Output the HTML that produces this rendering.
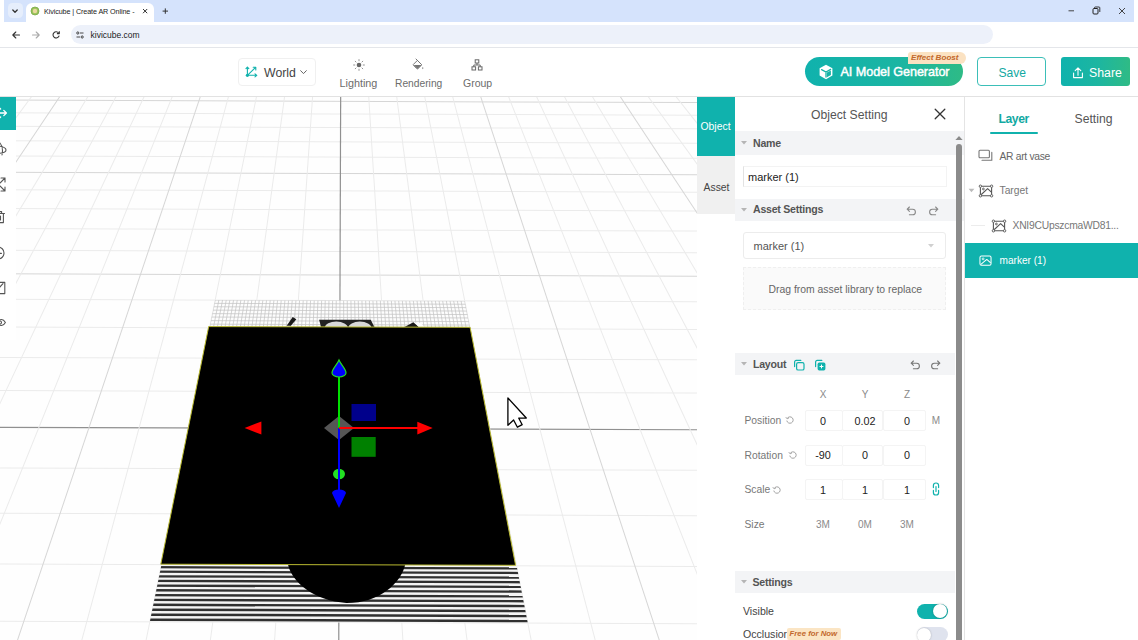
<!DOCTYPE html>
<html><head><meta charset="utf-8"><title>Kivicube | Create AR Online</title>
<style>
*{box-sizing:border-box;margin:0;padding:0}
html,body{width:1138px;height:640px;overflow:hidden;background:#fff;font-family:"Liberation Sans",sans-serif;color:#444}
.abs{position:absolute}
#tabstrip{left:4px;top:0;width:1130px;height:22.5px;background:#d5e3fc}
#tab{left:26px;top:3px;width:128px;height:20px;background:#fff;border-radius:6px 6px 0 0}
#toolbar{left:0;top:22px;width:1138px;height:26px;background:#fff;border-bottom:1px solid #e4e6ea;border-radius:5px 5px 0 0}
#pill{left:71px;top:25px;width:922px;height:19px;border-radius:10px;background:#edf1fa}
.t{position:absolute;white-space:nowrap;line-height:1}
#header{left:0;top:48px;width:1138px;height:49px;background:#fff;border-bottom:1px solid #e2e2e2}
#canvas{left:0;top:97px;width:697px;height:543px;background:#fefefe;overflow:hidden}
#ltool{left:0;top:97px;width:16px;height:243px;background:#fff;overflow:hidden}
#ltool .act{left:0;top:0;width:16px;height:33px;background:#10b2ad}
#vtabs{left:697px;top:97px;width:38px;height:543px;background:#fff}
#vt1{left:0;top:0;width:38px;height:59px;background:#10b2ad}
#vt2{left:0;top:59px;width:38px;height:58px;background:#f0f0f0}
#opanel{left:735px;top:97px;width:229px;height:543px;background:#fff}
.sec{position:absolute;left:0;width:221px;background:#f3f4f6}
#rpanel{left:964px;top:97px;width:174px;height:543px;background:#fff;border-left:1px solid #e4e4e4}
.inp{position:absolute;height:21px;border:1px solid #f4f4f4;border-radius:2px;background:#fff;color:#222;font-size:11px;text-align:center;line-height:19px}
.b{font-weight:bold;font-size:10.6px;color:#555;letter-spacing:-0.25px}
.c{text-align:center;font-size:10px;color:#8a8a8a}
.l{font-size:10.3px;color:#777}
.v{text-align:center;font-size:10.8px;color:#222}
</style></head><body>
<!-- browser chrome -->
<div id="tabstrip" class="abs"></div>
<div id="tab" class="abs"></div>
<div id="toolbar" class="abs"></div>
<div id="pill" class="abs"></div>
<div class="abs" style="left:7.7px;top:3px;width:15.3px;height:15px;border-radius:4.5px;background:#e6eefc"></div>
<svg class="abs" style="left:8.3px;top:3.6px" width="14" height="14" viewBox="0 0 14 14"><path d="M4.8 6 L7 8.2 L9.2 6" fill="none" stroke="#333" stroke-width="1.3" stroke-linecap="round" stroke-linejoin="round"/></svg>
<svg class="abs" style="left:30px;top:6px" width="10" height="10" viewBox="0 0 10 10"><circle cx="5" cy="5" r="4" fill="#9bc45a"/><circle cx="5" cy="5" r="2.2" fill="#e9d9a0"/><circle cx="5" cy="5" r="4" fill="none" stroke="#7aa848" stroke-width="0.8"/></svg>
<span class="t" style="left:44px;top:7.5px;font-size:7.2px;color:#222;letter-spacing:-0.1px">Kivicube | Create AR Online -</span>
<svg class="abs" style="left:141px;top:7px" width="8" height="8" viewBox="0 0 8 8"><path d="M2 2 L6.2 6.2 M6.2 2 L2 6.2" stroke="#333" stroke-width="1"/></svg>
<svg class="abs" style="left:160px;top:6px" width="10" height="10" viewBox="0 0 10 10"><path d="M5.3 2.4 V7.8 M2.6 5.1 H8" stroke="#333" stroke-width="1"/></svg>
<svg class="abs" style="left:1064.6px;top:5.5px" width="64" height="10" viewBox="0 0 64 10"><path d="M3.5 4.8 H9" stroke="#333" stroke-width="0.9"/><rect x="28" y="2.5" width="5" height="5.5" rx="1" fill="none" stroke="#222" stroke-width="1"/><path d="M29.5 2.5 V1.8 a0.8 0.8 0 0 1 0.8 -0.8 H34 a0.8 0.8 0 0 1 0.8 0.8 V6" fill="none" stroke="#222" stroke-width="0.9"/><path d="M54 2 L60 8 M60 2 L54 8" stroke="#333" stroke-width="0.9"/></svg>
<svg class="abs" style="left:10.3px;top:28.7px" width="60" height="12" viewBox="0 0 60 12"><path d="M9.5 6 H3 M5.8 3 L2.8 6 L5.8 9" fill="none" stroke="#333" stroke-width="1.1" stroke-linecap="round" stroke-linejoin="round"/><path d="M22.5 6 H29 M26.2 3 L29.2 6 L26.2 9" fill="none" stroke="#aaa" stroke-width="1.1" stroke-linecap="round" stroke-linejoin="round"/><path d="M48.6 4 A3.1 3.1 0 1 0 49 7" fill="none" stroke="#333" stroke-width="1.1" stroke-linecap="round"/><path d="M49.3 2.2 V4.6 H46.9" fill="none" stroke="#333" stroke-width="1.1" stroke-linejoin="round"/></svg>
<svg class="abs" style="left:75.3px;top:29.7px" width="10" height="10" viewBox="0 0 10 10"><circle cx="2.8" cy="3" r="1.1" fill="none" stroke="#333" stroke-width="0.9"/><path d="M5 3 H8.5" stroke="#333" stroke-width="0.9"/><circle cx="7.2" cy="7" r="1.1" fill="none" stroke="#333" stroke-width="0.9"/><path d="M1.5 7 H5" stroke="#333" stroke-width="0.9"/></svg>
<span class="t" style="left:90.5px;top:31px;font-size:8.5px;color:#222">kivicube.com</span>

<div id="header" class="abs"></div>
<div class="abs" style="left:237.5px;top:57.5px;width:78px;height:28.5px;border:1px solid #f0f0f0;border-radius:4px;background:#fff"></div>
<svg class="abs" style="left:244px;top:63px" width="16" height="16" viewBox="0 0 16 16"><g fill="none" stroke="#10b2ad" stroke-width="1.1" stroke-linecap="round" stroke-linejoin="round"><path d="M3.4 12.3 V4.2 M2 5.7 L3.4 4 L4.8 5.7 M3.4 12.3 H12.6 M11 10.8 L12.8 12.3 L11 13.8 M3.4 12.3 L11.6 4.4 M9.2 4.3 H11.8 V6.9"/></g><circle cx="3.4" cy="12.3" r="1.6" fill="#10b2ad"/></svg>
<span class="t" style="left:264px;top:67px;font-size:12.3px;color:#444">World</span>
<svg class="abs" style="left:299.4px;top:67.6px" width="9" height="8" viewBox="0 0 9 8"><path d="M1.4 2.4 L4.5 5.6 L7.6 2.4" fill="none" stroke="#666" stroke-width="1"/></svg>
<!-- lighting -->
<svg class="abs" style="left:352px;top:57.6px" width="14" height="14" viewBox="0 0 14 14"><circle cx="7" cy="7" r="2.3" fill="#666"/><g stroke="#888" stroke-width="0.9" stroke-linecap="round"><path d="M7 1.6 V2.8 M7 11.2 V12.4 M1.6 7 H2.8 M11.2 7 H12.4 M3.2 3.2 L4 4 M10 10 L10.8 10.8 M3.2 10.8 L4 10 M10 4 L10.8 3.2"/></g></svg>
<span class="t" style="left:339.5px;top:77.5px;font-size:10.8px;color:#6c6c6c">Lighting</span>
<!-- rendering -->
<svg class="abs" style="left:411px;top:58px" width="14" height="14" viewBox="0 0 14 14"><path d="M6.4 2.4 L10.8 6.8 L6.9 10.7 Q6.4 11.1 5.9 10.7 L2.4 7.2 Q2 6.8 2.4 6.4 Z" fill="none" stroke="#777" stroke-width="1" stroke-linejoin="round"/><path d="M2.6 6.9 H10.6 L6.9 10.6 Q6.4 11 5.9 10.6 Z" fill="#777"/><path d="M5 1 L7 3" stroke="#777" stroke-width="1" stroke-linecap="round"/><path d="M11.8 8.8 Q13 10.6 11.8 11.2 Q10.6 10.6 11.8 8.8 Z" fill="#777"/></svg>
<span class="t" style="left:395px;top:79px;font-size:10.25px;color:#6c6c6c">Rendering</span>
<!-- group -->
<svg class="abs" style="left:470px;top:57.7px" width="14" height="14" viewBox="0 0 14 14"><g fill="none" stroke="#666" stroke-width="1"><rect x="5.2" y="1.8" width="3.6" height="3.2"/><rect x="2" y="8.8" width="3.6" height="3.2"/><rect x="8.4" y="8.8" width="3.6" height="3.2"/><path d="M7 5 V7 M3.8 8.8 V7 H10.2 V8.8"/></g></svg>
<span class="t" style="left:463px;top:77.5px;font-size:10.5px;color:#6c6c6c">Group</span>
<!-- AI button -->
<div class="abs" style="left:805px;top:57px;width:158px;height:29px;border-radius:15px;background:linear-gradient(90deg,#10b2ad 0%,#1bb5a2 60%,#2ebb86 100%)"></div>
<svg class="abs" style="left:817px;top:63px" width="18" height="18" viewBox="0 0 18 18"><path d="M9 1.8 L15.4 5.2 V12.6 L9 16.2 L2.6 12.6 V5.2 Z" fill="#fff"/><path d="M4.6 6.6 L9 9 L13.6 6.4 M9 9 V14" fill="none" stroke="#16b4a6" stroke-width="1.3" stroke-linecap="round"/><path d="M9.9 9.6 L13.9 7.4 V11.9 L9.9 14.2 Z" fill="#16b4a6"/></svg>
<span class="t" style="left:840.5px;top:66px;font-size:12.6px;color:#fff;-webkit-text-stroke:0.45px #fff;letter-spacing:-0.05px">AI Model Generator</span>
<div class="abs" style="left:907.5px;top:51.5px;width:58px;height:12px;border-radius:3px 6px 6px 0;background:#fbe2c2"></div>
<span class="t" style="left:911px;top:53.5px;font-size:8.1px;color:#c2682c;font-style:italic;font-weight:bold">Effect Boost</span>
<!-- Save -->
<div class="abs" style="left:976.5px;top:56.5px;width:69.5px;height:29.5px;border:1px solid #3bbfb8;border-radius:4px;background:#fff"></div>
<span class="t" style="left:998.5px;top:67px;font-size:12.1px;color:#12a9a2">Save</span>
<!-- Share -->
<div class="abs" style="left:1060.5px;top:57px;width:69.5px;height:28.5px;border-radius:3px;background:linear-gradient(90deg,#10b2ad 0%,#1db6a0 55%,#2fbb85 100%)"></div>
<svg class="abs" style="left:1071px;top:65.5px" width="14" height="14" viewBox="0 0 14 14"><path d="M7 9.2 V2 M4.2 4.6 L7 1.8 L9.8 4.6 M2.6 7 V11.6 H11.4 V7" fill="none" stroke="#fff" stroke-width="1.1" stroke-linecap="round" stroke-linejoin="round"/></svg>
<span class="t" style="left:1089px;top:67px;font-size:12.3px;color:#fff">Share</span>

<div id="canvas" class="abs">
<svg width="697" height="543" viewBox="0 0 697 543" style="position:absolute;left:0;top:0">
<rect width="697" height="543" fill="#fefefe"/>
<g transform="rotate(0.2 339 332)">
<line x1="-5" y1="4.3" x2="705" y2="4.3" stroke="#d6d6d6" stroke-width="1"/>
<line x1="-5" y1="17.0" x2="705" y2="17.0" stroke="#ebebeb" stroke-width="1"/>
<line x1="-5" y1="30.5" x2="705" y2="30.5" stroke="#ebebeb" stroke-width="1"/>
<line x1="-5" y1="44.9" x2="705" y2="44.9" stroke="#ebebeb" stroke-width="1"/>
<line x1="-5" y1="60.1" x2="705" y2="60.1" stroke="#ebebeb" stroke-width="1"/>
<line x1="-5" y1="76.5" x2="705" y2="76.5" stroke="#d6d6d6" stroke-width="1"/>
<line x1="-5" y1="93.9" x2="705" y2="93.9" stroke="#ebebeb" stroke-width="1"/>
<line x1="-5" y1="112.7" x2="705" y2="112.7" stroke="#ebebeb" stroke-width="1"/>
<line x1="-5" y1="132.8" x2="705" y2="132.8" stroke="#ebebeb" stroke-width="1"/>
<line x1="-5" y1="154.5" x2="705" y2="154.5" stroke="#ebebeb" stroke-width="1"/>
<line x1="-5" y1="178.0" x2="705" y2="178.0" stroke="#d6d6d6" stroke-width="1"/>
<line x1="-5" y1="203.5" x2="705" y2="203.5" stroke="#ebebeb" stroke-width="1"/>
<line x1="-5" y1="231.2" x2="705" y2="231.2" stroke="#ebebeb" stroke-width="1"/>
<line x1="-5" y1="261.6" x2="705" y2="261.6" stroke="#ebebeb" stroke-width="1"/>
<line x1="-5" y1="294.8" x2="705" y2="294.8" stroke="#ebebeb" stroke-width="1"/>
<line x1="-5" y1="331.5" x2="705" y2="331.5" stroke="#909090" stroke-width="1.2"/>
<line x1="-5" y1="372.1" x2="705" y2="372.1" stroke="#ebebeb" stroke-width="1"/>
<line x1="-5" y1="417.4" x2="705" y2="417.4" stroke="#ebebeb" stroke-width="1"/>
<line x1="-5" y1="468.2" x2="705" y2="468.2" stroke="#ebebeb" stroke-width="1"/>
<line x1="-5" y1="525.5" x2="705" y2="525.5" stroke="#ebebeb" stroke-width="1"/>
<line x1="5.3" y1="-3" x2="-434.5" y2="548" stroke="#ebebeb" stroke-width="1"/>
<line x1="33.1" y1="-3" x2="-370.0" y2="548" stroke="#ebebeb" stroke-width="1"/>
<line x1="61.0" y1="-3" x2="-305.5" y2="548" stroke="#d6d6d6" stroke-width="1"/>
<line x1="88.8" y1="-3" x2="-241.0" y2="548" stroke="#ebebeb" stroke-width="1"/>
<line x1="116.7" y1="-3" x2="-176.5" y2="548" stroke="#ebebeb" stroke-width="1"/>
<line x1="144.5" y1="-3" x2="-112.0" y2="548" stroke="#ebebeb" stroke-width="1"/>
<line x1="172.4" y1="-3" x2="-47.5" y2="548" stroke="#ebebeb" stroke-width="1"/>
<line x1="200.2" y1="-3" x2="17.0" y2="548" stroke="#d6d6d6" stroke-width="1"/>
<line x1="228.1" y1="-3" x2="81.5" y2="548" stroke="#ebebeb" stroke-width="1"/>
<line x1="255.9" y1="-3" x2="146.0" y2="548" stroke="#ebebeb" stroke-width="1"/>
<line x1="283.8" y1="-3" x2="210.5" y2="548" stroke="#ebebeb" stroke-width="1"/>
<line x1="311.6" y1="-3" x2="275.0" y2="548" stroke="#ebebeb" stroke-width="1"/>
<line x1="339.5" y1="-3" x2="339.5" y2="548" stroke="#909090" stroke-width="1.2"/>
<line x1="367.4" y1="-3" x2="404.0" y2="548" stroke="#ebebeb" stroke-width="1"/>
<line x1="395.2" y1="-3" x2="468.5" y2="548" stroke="#ebebeb" stroke-width="1"/>
<line x1="423.1" y1="-3" x2="533.0" y2="548" stroke="#ebebeb" stroke-width="1"/>
<line x1="450.9" y1="-3" x2="597.5" y2="548" stroke="#ebebeb" stroke-width="1"/>
<line x1="478.8" y1="-3" x2="662.0" y2="548" stroke="#d6d6d6" stroke-width="1"/>
<line x1="506.6" y1="-3" x2="726.5" y2="548" stroke="#ebebeb" stroke-width="1"/>
<line x1="534.5" y1="-3" x2="791.0" y2="548" stroke="#ebebeb" stroke-width="1"/>
<line x1="562.3" y1="-3" x2="855.5" y2="548" stroke="#ebebeb" stroke-width="1"/>
<line x1="590.2" y1="-3" x2="920.0" y2="548" stroke="#ebebeb" stroke-width="1"/>
<line x1="618.0" y1="-3" x2="984.5" y2="548" stroke="#d6d6d6" stroke-width="1"/>
<line x1="645.9" y1="-3" x2="1049.0" y2="548" stroke="#ebebeb" stroke-width="1"/>
<line x1="673.7" y1="-3" x2="1113.5" y2="548" stroke="#ebebeb" stroke-width="1"/>
<line x1="701.6" y1="-3" x2="1178.0" y2="548" stroke="#ebebeb" stroke-width="1"/>
<defs><clipPath id="cpT"><polygon points="214.7,203.5 464.3,203.5 471.0,237.1 208.0,237.1"/></clipPath>
<clipPath id="cpB"><polygon points="164.1,457.5 514.9,457.5 528.5,525.5 150.5,525.5"/></clipPath></defs>
<g clip-path="url(#cpT)"><rect x="200" y="200" width="300" height="40" fill="#fdfdfd"/>
<line x1="214.7" y1="203.5" x2="208.0" y2="237.1" stroke="#c4c4c4" stroke-width="0.75"/>
<line x1="218.4" y1="203.5" x2="211.9" y2="237.1" stroke="#c4c4c4" stroke-width="0.75"/>
<line x1="222.1" y1="203.5" x2="215.8" y2="237.1" stroke="#c4c4c4" stroke-width="0.75"/>
<line x1="225.8" y1="203.5" x2="219.6" y2="237.1" stroke="#c4c4c4" stroke-width="0.75"/>
<line x1="229.4" y1="203.5" x2="223.5" y2="237.1" stroke="#c4c4c4" stroke-width="0.75"/>
<line x1="233.1" y1="203.5" x2="227.4" y2="237.1" stroke="#c4c4c4" stroke-width="0.75"/>
<line x1="236.8" y1="203.5" x2="231.2" y2="237.1" stroke="#c4c4c4" stroke-width="0.75"/>
<line x1="240.4" y1="203.5" x2="235.1" y2="237.1" stroke="#c4c4c4" stroke-width="0.75"/>
<line x1="244.1" y1="203.5" x2="239.0" y2="237.1" stroke="#c4c4c4" stroke-width="0.75"/>
<line x1="247.8" y1="203.5" x2="242.8" y2="237.1" stroke="#c4c4c4" stroke-width="0.75"/>
<line x1="251.4" y1="203.5" x2="246.7" y2="237.1" stroke="#c4c4c4" stroke-width="0.75"/>
<line x1="255.1" y1="203.5" x2="250.6" y2="237.1" stroke="#c4c4c4" stroke-width="0.75"/>
<line x1="258.8" y1="203.5" x2="254.4" y2="237.1" stroke="#c4c4c4" stroke-width="0.75"/>
<line x1="262.4" y1="203.5" x2="258.3" y2="237.1" stroke="#c4c4c4" stroke-width="0.75"/>
<line x1="266.1" y1="203.5" x2="262.2" y2="237.1" stroke="#c4c4c4" stroke-width="0.75"/>
<line x1="269.8" y1="203.5" x2="266.0" y2="237.1" stroke="#c4c4c4" stroke-width="0.75"/>
<line x1="273.5" y1="203.5" x2="269.9" y2="237.1" stroke="#c4c4c4" stroke-width="0.75"/>
<line x1="277.1" y1="203.5" x2="273.8" y2="237.1" stroke="#c4c4c4" stroke-width="0.75"/>
<line x1="280.8" y1="203.5" x2="277.6" y2="237.1" stroke="#c4c4c4" stroke-width="0.75"/>
<line x1="284.5" y1="203.5" x2="281.5" y2="237.1" stroke="#c4c4c4" stroke-width="0.75"/>
<line x1="288.1" y1="203.5" x2="285.4" y2="237.1" stroke="#c4c4c4" stroke-width="0.75"/>
<line x1="291.8" y1="203.5" x2="289.2" y2="237.1" stroke="#c4c4c4" stroke-width="0.75"/>
<line x1="295.5" y1="203.5" x2="293.1" y2="237.1" stroke="#c4c4c4" stroke-width="0.75"/>
<line x1="299.1" y1="203.5" x2="297.0" y2="237.1" stroke="#c4c4c4" stroke-width="0.75"/>
<line x1="302.8" y1="203.5" x2="300.8" y2="237.1" stroke="#c4c4c4" stroke-width="0.75"/>
<line x1="306.5" y1="203.5" x2="304.7" y2="237.1" stroke="#c4c4c4" stroke-width="0.75"/>
<line x1="310.1" y1="203.5" x2="308.6" y2="237.1" stroke="#c4c4c4" stroke-width="0.75"/>
<line x1="313.8" y1="203.5" x2="312.4" y2="237.1" stroke="#c4c4c4" stroke-width="0.75"/>
<line x1="317.5" y1="203.5" x2="316.3" y2="237.1" stroke="#c4c4c4" stroke-width="0.75"/>
<line x1="321.2" y1="203.5" x2="320.2" y2="237.1" stroke="#c4c4c4" stroke-width="0.75"/>
<line x1="324.8" y1="203.5" x2="324.0" y2="237.1" stroke="#c4c4c4" stroke-width="0.75"/>
<line x1="328.5" y1="203.5" x2="327.9" y2="237.1" stroke="#c4c4c4" stroke-width="0.75"/>
<line x1="332.2" y1="203.5" x2="331.8" y2="237.1" stroke="#c4c4c4" stroke-width="0.75"/>
<line x1="335.8" y1="203.5" x2="335.6" y2="237.1" stroke="#c4c4c4" stroke-width="0.75"/>
<line x1="339.5" y1="203.5" x2="339.5" y2="237.1" stroke="#c4c4c4" stroke-width="0.75"/>
<line x1="343.2" y1="203.5" x2="343.4" y2="237.1" stroke="#c4c4c4" stroke-width="0.75"/>
<line x1="346.8" y1="203.5" x2="347.2" y2="237.1" stroke="#c4c4c4" stroke-width="0.75"/>
<line x1="350.5" y1="203.5" x2="351.1" y2="237.1" stroke="#c4c4c4" stroke-width="0.75"/>
<line x1="354.2" y1="203.5" x2="355.0" y2="237.1" stroke="#c4c4c4" stroke-width="0.75"/>
<line x1="357.8" y1="203.5" x2="358.8" y2="237.1" stroke="#c4c4c4" stroke-width="0.75"/>
<line x1="361.5" y1="203.5" x2="362.7" y2="237.1" stroke="#c4c4c4" stroke-width="0.75"/>
<line x1="365.2" y1="203.5" x2="366.6" y2="237.1" stroke="#c4c4c4" stroke-width="0.75"/>
<line x1="368.9" y1="203.5" x2="370.4" y2="237.1" stroke="#c4c4c4" stroke-width="0.75"/>
<line x1="372.5" y1="203.5" x2="374.3" y2="237.1" stroke="#c4c4c4" stroke-width="0.75"/>
<line x1="376.2" y1="203.5" x2="378.2" y2="237.1" stroke="#c4c4c4" stroke-width="0.75"/>
<line x1="379.9" y1="203.5" x2="382.0" y2="237.1" stroke="#c4c4c4" stroke-width="0.75"/>
<line x1="383.5" y1="203.5" x2="385.9" y2="237.1" stroke="#c4c4c4" stroke-width="0.75"/>
<line x1="387.2" y1="203.5" x2="389.8" y2="237.1" stroke="#c4c4c4" stroke-width="0.75"/>
<line x1="390.9" y1="203.5" x2="393.6" y2="237.1" stroke="#c4c4c4" stroke-width="0.75"/>
<line x1="394.5" y1="203.5" x2="397.5" y2="237.1" stroke="#c4c4c4" stroke-width="0.75"/>
<line x1="398.2" y1="203.5" x2="401.4" y2="237.1" stroke="#c4c4c4" stroke-width="0.75"/>
<line x1="401.9" y1="203.5" x2="405.2" y2="237.1" stroke="#c4c4c4" stroke-width="0.75"/>
<line x1="405.5" y1="203.5" x2="409.1" y2="237.1" stroke="#c4c4c4" stroke-width="0.75"/>
<line x1="409.2" y1="203.5" x2="413.0" y2="237.1" stroke="#c4c4c4" stroke-width="0.75"/>
<line x1="412.9" y1="203.5" x2="416.8" y2="237.1" stroke="#c4c4c4" stroke-width="0.75"/>
<line x1="416.6" y1="203.5" x2="420.7" y2="237.1" stroke="#c4c4c4" stroke-width="0.75"/>
<line x1="420.2" y1="203.5" x2="424.6" y2="237.1" stroke="#c4c4c4" stroke-width="0.75"/>
<line x1="423.9" y1="203.5" x2="428.4" y2="237.1" stroke="#c4c4c4" stroke-width="0.75"/>
<line x1="427.6" y1="203.5" x2="432.3" y2="237.1" stroke="#c4c4c4" stroke-width="0.75"/>
<line x1="431.2" y1="203.5" x2="436.2" y2="237.1" stroke="#c4c4c4" stroke-width="0.75"/>
<line x1="434.9" y1="203.5" x2="440.0" y2="237.1" stroke="#c4c4c4" stroke-width="0.75"/>
<line x1="438.6" y1="203.5" x2="443.9" y2="237.1" stroke="#c4c4c4" stroke-width="0.75"/>
<line x1="442.2" y1="203.5" x2="447.8" y2="237.1" stroke="#c4c4c4" stroke-width="0.75"/>
<line x1="445.9" y1="203.5" x2="451.6" y2="237.1" stroke="#c4c4c4" stroke-width="0.75"/>
<line x1="449.6" y1="203.5" x2="455.5" y2="237.1" stroke="#c4c4c4" stroke-width="0.75"/>
<line x1="453.2" y1="203.5" x2="459.4" y2="237.1" stroke="#c4c4c4" stroke-width="0.75"/>
<line x1="456.9" y1="203.5" x2="463.2" y2="237.1" stroke="#c4c4c4" stroke-width="0.75"/>
<line x1="460.6" y1="203.5" x2="467.1" y2="237.1" stroke="#c4c4c4" stroke-width="0.75"/>
<line x1="464.3" y1="203.5" x2="471.0" y2="237.1" stroke="#c4c4c4" stroke-width="0.75"/>
<line x1="200" y1="203.5" x2="480" y2="203.5" stroke="#c4c4c4" stroke-width="0.75"/>
<line x1="200" y1="206.8" x2="480" y2="206.8" stroke="#c4c4c4" stroke-width="0.75"/>
<line x1="200" y1="210.2" x2="480" y2="210.2" stroke="#c4c4c4" stroke-width="0.75"/>
<line x1="200" y1="213.6" x2="480" y2="213.6" stroke="#c4c4c4" stroke-width="0.75"/>
<line x1="200" y1="217.1" x2="480" y2="217.1" stroke="#c4c4c4" stroke-width="0.75"/>
<line x1="200" y1="220.5" x2="480" y2="220.5" stroke="#c4c4c4" stroke-width="0.75"/>
<line x1="200" y1="224.1" x2="480" y2="224.1" stroke="#c4c4c4" stroke-width="0.75"/>
<line x1="200" y1="227.6" x2="480" y2="227.6" stroke="#c4c4c4" stroke-width="0.75"/>
<line x1="200" y1="231.2" x2="480" y2="231.2" stroke="#c4c4c4" stroke-width="0.75"/>
<line x1="200" y1="234.9" x2="480" y2="234.9" stroke="#c4c4c4" stroke-width="0.75"/>
<line x1="200" y1="238.6" x2="480" y2="238.6" stroke="#c4c4c4" stroke-width="0.75"/>
</g>
<polygon points="286.3,229 290.5,229 296,222.5 292.3,220.2" fill="#1a1a1a"/>
<polygon points="318.7,222.7 370.4,222.7 374.5,231 321,231" fill="#222"/>
<ellipse cx="336" cy="231" rx="11.5" ry="6.5" fill="#d8d8d8"/><ellipse cx="359.5" cy="231" rx="11.5" ry="6.5" fill="#d8d8d8"/>
<polygon points="402.8,230.5 413,225 419.4,230.5" fill="#1a1a1a"/><polygon points="414,225.5 420,225.5 425,230.5 419.4,230.5" fill="#fff"/>
<g clip-path="url(#cpB)"><rect x="140" y="460" width="400" height="70" fill="#f4f4f4"/>
<rect x="140" y="469.70" width="400" height="2.26" fill="#303030"/>
<rect x="140" y="474.22" width="400" height="2.28" fill="#303030"/>
<rect x="140" y="478.79" width="400" height="2.30" fill="#303030"/>
<rect x="140" y="483.41" width="400" height="2.33" fill="#303030"/>
<rect x="140" y="488.07" width="400" height="2.35" fill="#303030"/>
<rect x="140" y="492.78" width="400" height="2.37" fill="#303030"/>
<rect x="140" y="497.54" width="400" height="2.40" fill="#303030"/>
<rect x="140" y="502.35" width="400" height="2.42" fill="#303030"/>
<rect x="140" y="507.22" width="400" height="2.45" fill="#303030"/>
<rect x="140" y="512.13" width="400" height="2.48" fill="#303030"/>
<rect x="140" y="517.09" width="400" height="2.50" fill="#303030"/>
<rect x="140" y="522.11" width="400" height="2.53" fill="#303030"/>
</g>
<path d="M288,466 C292,486 315,504 347,506 C380,506 402,486 406,466 Z" fill="#000"/>

</g>

<polygon points="208.7,229.6 470.1,230.3 515.6,468.3 160.8,467.2" fill="#000" stroke="#b9b930" stroke-width="1"/>
<polygon points="324,331 339,319 354,331 339,343" fill="#626262" opacity="0.88"/>
<rect x="351.5" y="307" width="24.5" height="17" fill="#00008b"/>
<rect x="351.5" y="340" width="24.2" height="19.8" fill="#008000"/>
<line x1="339" y1="331" x2="339" y2="278" stroke="#00e000" stroke-width="2"/>
<line x1="339" y1="331" x2="339" y2="396" stroke="#0000ff" stroke-width="2"/>
<line x1="339" y1="331" x2="419" y2="331" stroke="#ff0000" stroke-width="2"/>
<polygon points="417.3,324.7 432.7,331 417.3,337.5" fill="#ff0000"/>
<polygon points="261.4,324.5 244.6,331 261.4,337.5" fill="#ff0000"/>
<path d="M339,263 C341,268 346,272 346,276 A7,4 0 0 1 332,276 C332,272 337,268 339,263 Z" fill="#0000ff" stroke="#22dd22" stroke-width="1.2"/>
<ellipse cx="339" cy="377" rx="6" ry="5.3" fill="#22e022"/><line x1="339" y1="370" x2="339" y2="384" stroke="#0000ff" stroke-width="2"/>
<path d="M332,396 A7,3.5 0 0 1 346,396 L339,411 Z" fill="#0000ff"/>
<path d="M507.9,398 L507.9,425.3 L513.6,420 L517.4,427.2 L522.2,424.7 L518.8,418.2 L526.3,418 Z" fill="#fff" stroke="#000" stroke-width="1.3" stroke-linejoin="round" transform="translate(0,-97)"/>
</svg>
</div>
<div id="ltool" class="abs"><div class="act abs"></div>
<svg class="abs" style="left:0;top:0" width="16" height="243" viewBox="0 0 16 243">
<g fill="none" stroke="#fff" stroke-width="1.3" stroke-linecap="round" stroke-linejoin="round"><path d="M-2 16 H6.2 M3.8 13.4 L6.4 16 L3.8 18.6 M-1 10.5 L0.6 12 M-1 21.5 L0.6 20"/></g>
<g fill="none" stroke="#555" stroke-width="1.1" stroke-linecap="round" stroke-linejoin="round">
<path d="M-2 49 Q6 50 6 53 Q6 56 -2 56.5 M0 46 Q3.6 50 2 58"/>
<path d="M1 81 H5 V85 M5 81 L0 86 M1 94 H5 V90 M5 94 L0 89"/>
<path d="M-1 116.5 H4.5 M3.4 116.5 V125.6 H-1 M0.5 119 V123 M-1 114.6 H1.6 V116.5"/>
<path d="M-2 150 A6 6 0 0 0 -2 162 M-2 150 A6 6 0 0 1 -2 162 M-2 153 V156.4 H1.4"/>
<path d="M-1 185.4 H4.8 V196.6 H-1 M-1 191 L3 186.6"/>
<path d="M-3 225.5 Q2 219.5 5.4 225.5 Q2 231.5 -3 225.5"/><circle cx="0" cy="225.5" r="1.5"/>
</g></svg>

</div>
<div id="vtabs" class="abs"><div id="vt1" class="abs"></div><div id="vt2" class="abs"></div>
<span class="t" style="left:3.5px;top:25px;font-size:10.4px;color:#fff">Object</span>
<span class="t" style="left:6.5px;top:85.5px;font-size:10.4px;color:#444">Asset</span>
</div>
<div id="opanel" class="abs">
<!-- coords relative to (735,97) -->
<span class="t" style="left:76px;top:11.5px;font-size:12.2px;color:#555">Object Setting</span>
<svg class="abs" style="left:198px;top:10px" width="14" height="14" viewBox="0 0 14 14"><path d="M2.2 2.2 L11.8 11.8 M11.8 2.2 L2.2 11.8" stroke="#333" stroke-width="1.3" stroke-linecap="round"/></svg>
<!-- Name -->
<div class="sec" style="top:33.5px;height:24px;width:229px"></div>
<svg class="abs" style="left:5px;top:43px" width="8" height="6" viewBox="0 0 8 6"><path d="M1 1 H7 L4 4.6 Z" fill="#b5b5b5"/></svg>
<span class="t b" style="left:18px;top:40.5px">Name</span>
<div class="abs" style="left:7.5px;top:69px;width:204px;height:20.5px;border:1px solid #f3f3f3;border-left-color:#e2e2e2;background:#fff"></div>
<span class="t" style="left:13px;top:74.5px;font-size:11px;color:#222">marker (1)</span>
<!-- Asset Settings -->
<div class="sec" style="top:101.5px;height:22px;width:229px"></div>
<svg class="abs" style="left:5px;top:110px" width="8" height="6" viewBox="0 0 8 6"><path d="M1 1 H7 L4 4.6 Z" fill="#b5b5b5"/></svg>
<span class="t b" style="left:18px;top:107px">Asset Settings</span>
<svg class="abs" style="left:170px;top:108px" width="12" height="12" viewBox="0 0 12 12"><path d="M2.2 4.2 H7.6 A2.7 2.7 0 0 1 7.6 9.8 H4.4 M4.4 2 L2.2 4.2 L4.4 6.4" fill="none" stroke="#888" stroke-width="1.1" stroke-linecap="round" stroke-linejoin="round"/></svg>
<svg class="abs" style="left:193px;top:108px" width="12" height="12" viewBox="0 0 12 12"><path d="M9.8 4.2 H4.4 A2.7 2.7 0 0 0 4.4 9.8 H7.6 M7.6 2 L9.8 4.2 L7.6 6.4" fill="none" stroke="#888" stroke-width="1.1" stroke-linecap="round" stroke-linejoin="round"/></svg>
<div class="abs" style="left:7.5px;top:134.5px;width:203.5px;height:27px;border:1px solid #ececec;border-radius:3px;background:#fff"></div>
<span class="t" style="left:18.5px;top:143.5px;font-size:11px;color:#555">marker (1)</span>
<svg class="abs" style="left:192px;top:146px" width="8" height="6" viewBox="0 0 8 6"><path d="M1 1 H7 L4 4.4 Z" fill="#d0d0d0"/></svg>
<div class="abs" style="left:7.5px;top:170px;width:203.5px;height:42.5px;border:1px dashed #efefef;background:#fafafa"></div>
<span class="t" style="left:33.5px;top:187.7px;font-size:10.4px;color:#666">Drag from asset library to replace</span>
<!-- Layout -->
<div class="sec" style="top:255.5px;height:22.5px;width:220px"></div>
<svg class="abs" style="left:5px;top:264px" width="8" height="6" viewBox="0 0 8 6"><path d="M1 1 H7 L4 4.6 Z" fill="#b5b5b5"/></svg>
<span class="t b" style="left:18px;top:261.5px">Layout</span>
<svg class="abs" style="left:57px;top:261px" width="14" height="14" viewBox="0 0 14 14"><rect x="4.6" y="4.6" width="7.4" height="7.4" rx="1.6" fill="none" stroke="#10b2ad" stroke-width="1.2"/><path d="M2.6 8.6 V4 A1.6 1.6 0 0 1 4.2 2.4 H8.8" fill="none" stroke="#10b2ad" stroke-width="1.2" stroke-linecap="round"/></svg>
<svg class="abs" style="left:78px;top:261px" width="14" height="14" viewBox="0 0 14 14"><rect x="4.6" y="4.6" width="7.8" height="7.8" rx="1.6" fill="#10b2ad"/><path d="M2.6 8.6 V4 A1.6 1.6 0 0 1 4.2 2.4 H8.8" fill="none" stroke="#10b2ad" stroke-width="1.2" stroke-linecap="round"/><path d="M8.5 6.6 V10.4 M6.6 8.5 H10.4" stroke="#fff" stroke-width="1"/></svg>
<svg class="abs" style="left:173.5px;top:262px" width="12" height="12" viewBox="0 0 12 12"><path d="M2.2 4.2 H7.6 A2.7 2.7 0 0 1 7.6 9.8 H4.4 M4.4 2 L2.2 4.2 L4.4 6.4" fill="none" stroke="#777" stroke-width="1.1" stroke-linecap="round" stroke-linejoin="round"/></svg>
<svg class="abs" style="left:195px;top:262px" width="12" height="12" viewBox="0 0 12 12"><path d="M9.8 4.2 H4.4 A2.7 2.7 0 0 0 4.4 9.8 H7.6 M7.6 2 L9.8 4.2 L7.6 6.4" fill="none" stroke="#777" stroke-width="1.1" stroke-linecap="round" stroke-linejoin="round"/></svg>
<span class="t c" style="left:78px;top:293px;width:20px">X</span>
<span class="t c" style="left:120px;top:293px;width:20px">Y</span>
<span class="t c" style="left:162px;top:293px;width:20px">Z</span>
<!-- position -->
<span class="t l" style="left:9.5px;top:319px">Position</span>
<svg class="abs rs" style="left:50px;top:318px" width="10" height="10" viewBox="0 0 10 10"><path d="M2.2 3.4 A3.2 3.2 0 1 1 1.8 5.6" fill="none" stroke="#999" stroke-width="0.9"/><path d="M0.8 2.2 L2.2 3.8 L4 2.8" fill="none" stroke="#999" stroke-width="0.9"/></svg>
<div class="inp" style="left:69.5px;top:313.0px;width:38.0px"></div><span class="t v" style="left:73px;top:318.5px;width:30px">0</span>
<div class="inp" style="left:107.0px;top:313.0px;width:41.0px"></div><span class="t v" style="left:115px;top:318.5px;width:30px">0.02</span>
<div class="inp" style="left:147.5px;top:313.0px;width:43.0px"></div><span class="t v" style="left:157px;top:318.5px;width:30px">0</span>
<span class="t c" style="left:191px;top:319px;width:20px">M</span>
<!-- rotation -->
<span class="t l" style="left:9.5px;top:354px">Rotation</span>
<svg class="abs rs" style="left:52.5px;top:352.5px" width="10" height="10" viewBox="0 0 10 10"><path d="M2.2 3.4 A3.2 3.2 0 1 1 1.8 5.6" fill="none" stroke="#999" stroke-width="0.9"/><path d="M0.8 2.2 L2.2 3.8 L4 2.8" fill="none" stroke="#999" stroke-width="0.9"/></svg>
<div class="inp" style="left:69.5px;top:347.5px;width:38.0px"></div><span class="t v" style="left:73px;top:353.0px;width:30px">-90</span>
<div class="inp" style="left:107.0px;top:347.5px;width:41.0px"></div><span class="t v" style="left:115px;top:353.0px;width:30px">0</span>
<div class="inp" style="left:147.5px;top:347.5px;width:43.0px"></div><span class="t v" style="left:157px;top:353.0px;width:30px">0</span>
<!-- scale -->
<span class="t l" style="left:9.5px;top:388px">Scale</span>
<svg class="abs rs" style="left:37px;top:387.5px" width="10" height="10" viewBox="0 0 10 10"><path d="M2.2 3.4 A3.2 3.2 0 1 1 1.8 5.6" fill="none" stroke="#999" stroke-width="0.9"/><path d="M0.8 2.2 L2.2 3.8 L4 2.8" fill="none" stroke="#999" stroke-width="0.9"/></svg>
<div class="inp" style="left:69.5px;top:382.0px;width:38.0px"></div><span class="t v" style="left:73px;top:387.5px;width:30px">1</span>
<div class="inp" style="left:107.0px;top:382.0px;width:41.0px"></div><span class="t v" style="left:115px;top:387.5px;width:30px">1</span>
<div class="inp" style="left:147.5px;top:382.0px;width:43.0px"></div><span class="t v" style="left:157px;top:387.5px;width:30px">1</span>
<svg class="abs" style="left:196px;top:384px" width="10" height="16" viewBox="0 0 10 16"><path d="M2.4 6.6 V4.6 A2.6 2.6 0 0 1 7.6 4.6 V6.6 M2.4 9.4 V11.4 A2.6 2.6 0 0 0 7.6 11.4 V9.4 M5 5.6 V10.4" fill="none" stroke="#10b2ad" stroke-width="1.2" stroke-linecap="round"/></svg>
<!-- size -->
<span class="t l" style="left:9.5px;top:423px">Size</span>
<span class="t c" style="left:78px;top:423px;width:20px">3M</span>
<span class="t c" style="left:120px;top:423px;width:20px">0M</span>
<span class="t c" style="left:162px;top:423px;width:20px">3M</span>
<!-- Settings -->
<div class="sec" style="top:473.5px;height:22.5px;width:220px"></div>
<svg class="abs" style="left:5px;top:482px" width="8" height="6" viewBox="0 0 8 6"><path d="M1 1 H7 L4 4.6 Z" fill="#b5b5b5"/></svg>
<span class="t b" style="left:17.5px;top:479.5px">Settings</span>
<span class="t" style="left:8px;top:508.5px;font-size:10.6px;color:#444">Visible</span>
<div class="abs" style="left:181.5px;top:506.5px;width:31px;height:15px;border-radius:8px;background:#10b2ad"></div>
<div class="abs" style="left:198px;top:507px;width:14px;height:14px;border-radius:7px;background:#fff;box-shadow:0 0 2px rgba(0,0,0,.35)"></div>
<span class="t" style="left:8px;top:532px;font-size:10.6px;color:#444">Occlusior</span>
<div class="abs" style="left:52px;top:530.5px;width:54px;height:12.5px;border-radius:2px;background:#fbe5c4"></div>
<span class="t" style="left:54.5px;top:532.5px;font-size:7.8px;color:#c2682c;font-style:italic;font-weight:bold">Free for Now</span>
<div class="abs" style="left:181.5px;top:530px;width:31px;height:15px;border-radius:8px;background:#dfe3ee"></div>
<div class="abs" style="left:182px;top:530.5px;width:14px;height:14px;border-radius:7px;background:#fff;box-shadow:0 0 2px rgba(0,0,0,.25)"></div>
<!-- scrollbar -->
<svg class="abs" style="left:219.5px;top:38px" width="8" height="6" viewBox="0 0 8 6"><path d="M0.4 5 L4 1 L7.6 5 Z" fill="#8b8b8b"/></svg>
<div class="abs" style="left:220.8px;top:46.5px;width:5.8px;height:520px;border-radius:3px;background:#8b8b8b"></div>

</div>
<div id="rpanel" class="abs">
<!-- coords relative to (964,97) ; border-left 1px so content origin is x=965 -->
<span class="t" style="left:33.5px;top:16px;font-size:12.2px;color:#12a9a2;font-weight:bold;letter-spacing:-0.45px">Layer</span>
<div class="abs" style="left:24.5px;top:34.5px;width:48.5px;height:2.5px;border-radius:2px;background:#10b2ad"></div>
<span class="t" style="left:109.5px;top:16px;font-size:12.2px;color:#555">Setting</span>
<!-- row1 -->
<svg class="abs" style="left:13px;top:52px" width="16" height="13" viewBox="0 0 16 13"><rect x="1" y="1.2" width="10.4" height="7.6" rx="1" fill="none" stroke="#777" stroke-width="1.1"/><path d="M13.8 3.4 V11.2 H4" fill="none" stroke="#777" stroke-width="1.1" stroke-linecap="round"/></svg>
<span class="t" style="left:34.5px;top:54.5px;font-size:10.3px;color:#666;letter-spacing:-0.3px">AR art vase</span>
<!-- row2 -->
<svg class="abs" style="left:3px;top:90.5px" width="7" height="5" viewBox="0 0 7 5"><path d="M0.6 0.8 H6.4 L3.5 4.2 Z" fill="#bbb"/></svg>
<svg class="abs" style="left:13px;top:87px" width="16" height="14" viewBox="0 0 16 14"><g fill="none" stroke="#555" stroke-width="1.1" stroke-linejoin="round"><rect x="2.4" y="2.2" width="11.2" height="9.6"/><path d="M2.8 11 L9.6 4.6 L13.4 8.2"/><circle cx="5.4" cy="5" r="0.9" stroke-width="0.9"/></g><g fill="#fff" stroke="#555" stroke-width="0.9"><circle cx="2.4" cy="2.2" r="1.2"/><circle cx="13.6" cy="2.2" r="1.2"/><circle cx="2.4" cy="11.8" r="1.2"/><circle cx="13.6" cy="11.8" r="1.2"/></g></svg>
<span class="t" style="left:34.5px;top:88.5px;font-size:10.3px;color:#777">Target</span>
<!-- row3 -->
<div class="abs" style="left:6px;top:128px;width:14px;height:1px;background:#ececec"></div>
<svg class="abs" style="left:26px;top:121.5px" width="16" height="14" viewBox="0 0 16 14"><g fill="none" stroke="#555" stroke-width="1.1" stroke-linejoin="round"><rect x="2.4" y="2.2" width="11.2" height="9.6"/><path d="M2.8 11 L9.6 4.6 L13.4 8.2"/><circle cx="5.4" cy="5" r="0.9" stroke-width="0.9"/></g><g fill="#fff" stroke="#555" stroke-width="0.9"><circle cx="2.4" cy="2.2" r="1.2"/><circle cx="13.6" cy="2.2" r="1.2"/><circle cx="2.4" cy="11.8" r="1.2"/><circle cx="13.6" cy="11.8" r="1.2"/></g></svg>
<span class="t" style="left:47.5px;top:123.5px;font-size:10.3px;color:#777;letter-spacing:-0.23px">XNI9CUpszcmaWD81...</span>
<!-- row4 selected -->
<div class="abs" style="left:0;top:146px;width:173px;height:34.5px;background:#10b2ad"></div>
<svg class="abs" style="left:13.7px;top:158px" width="13" height="11.1" viewBox="0 0 14 12"><rect x="1" y="1" width="12" height="10" rx="1.6" fill="none" stroke="#fff" stroke-width="1.1"/><path d="M2 10.2 L8.4 4.8 L12.6 8.4" fill="none" stroke="#fff" stroke-width="1.1" stroke-linejoin="round"/><circle cx="4.4" cy="4.2" r="1" fill="none" stroke="#fff" stroke-width="0.9"/></svg>
<span class="t" style="left:34.5px;top:158.5px;font-size:10.1px;color:#fff">marker (1)</span>

</div>
</body></html>
